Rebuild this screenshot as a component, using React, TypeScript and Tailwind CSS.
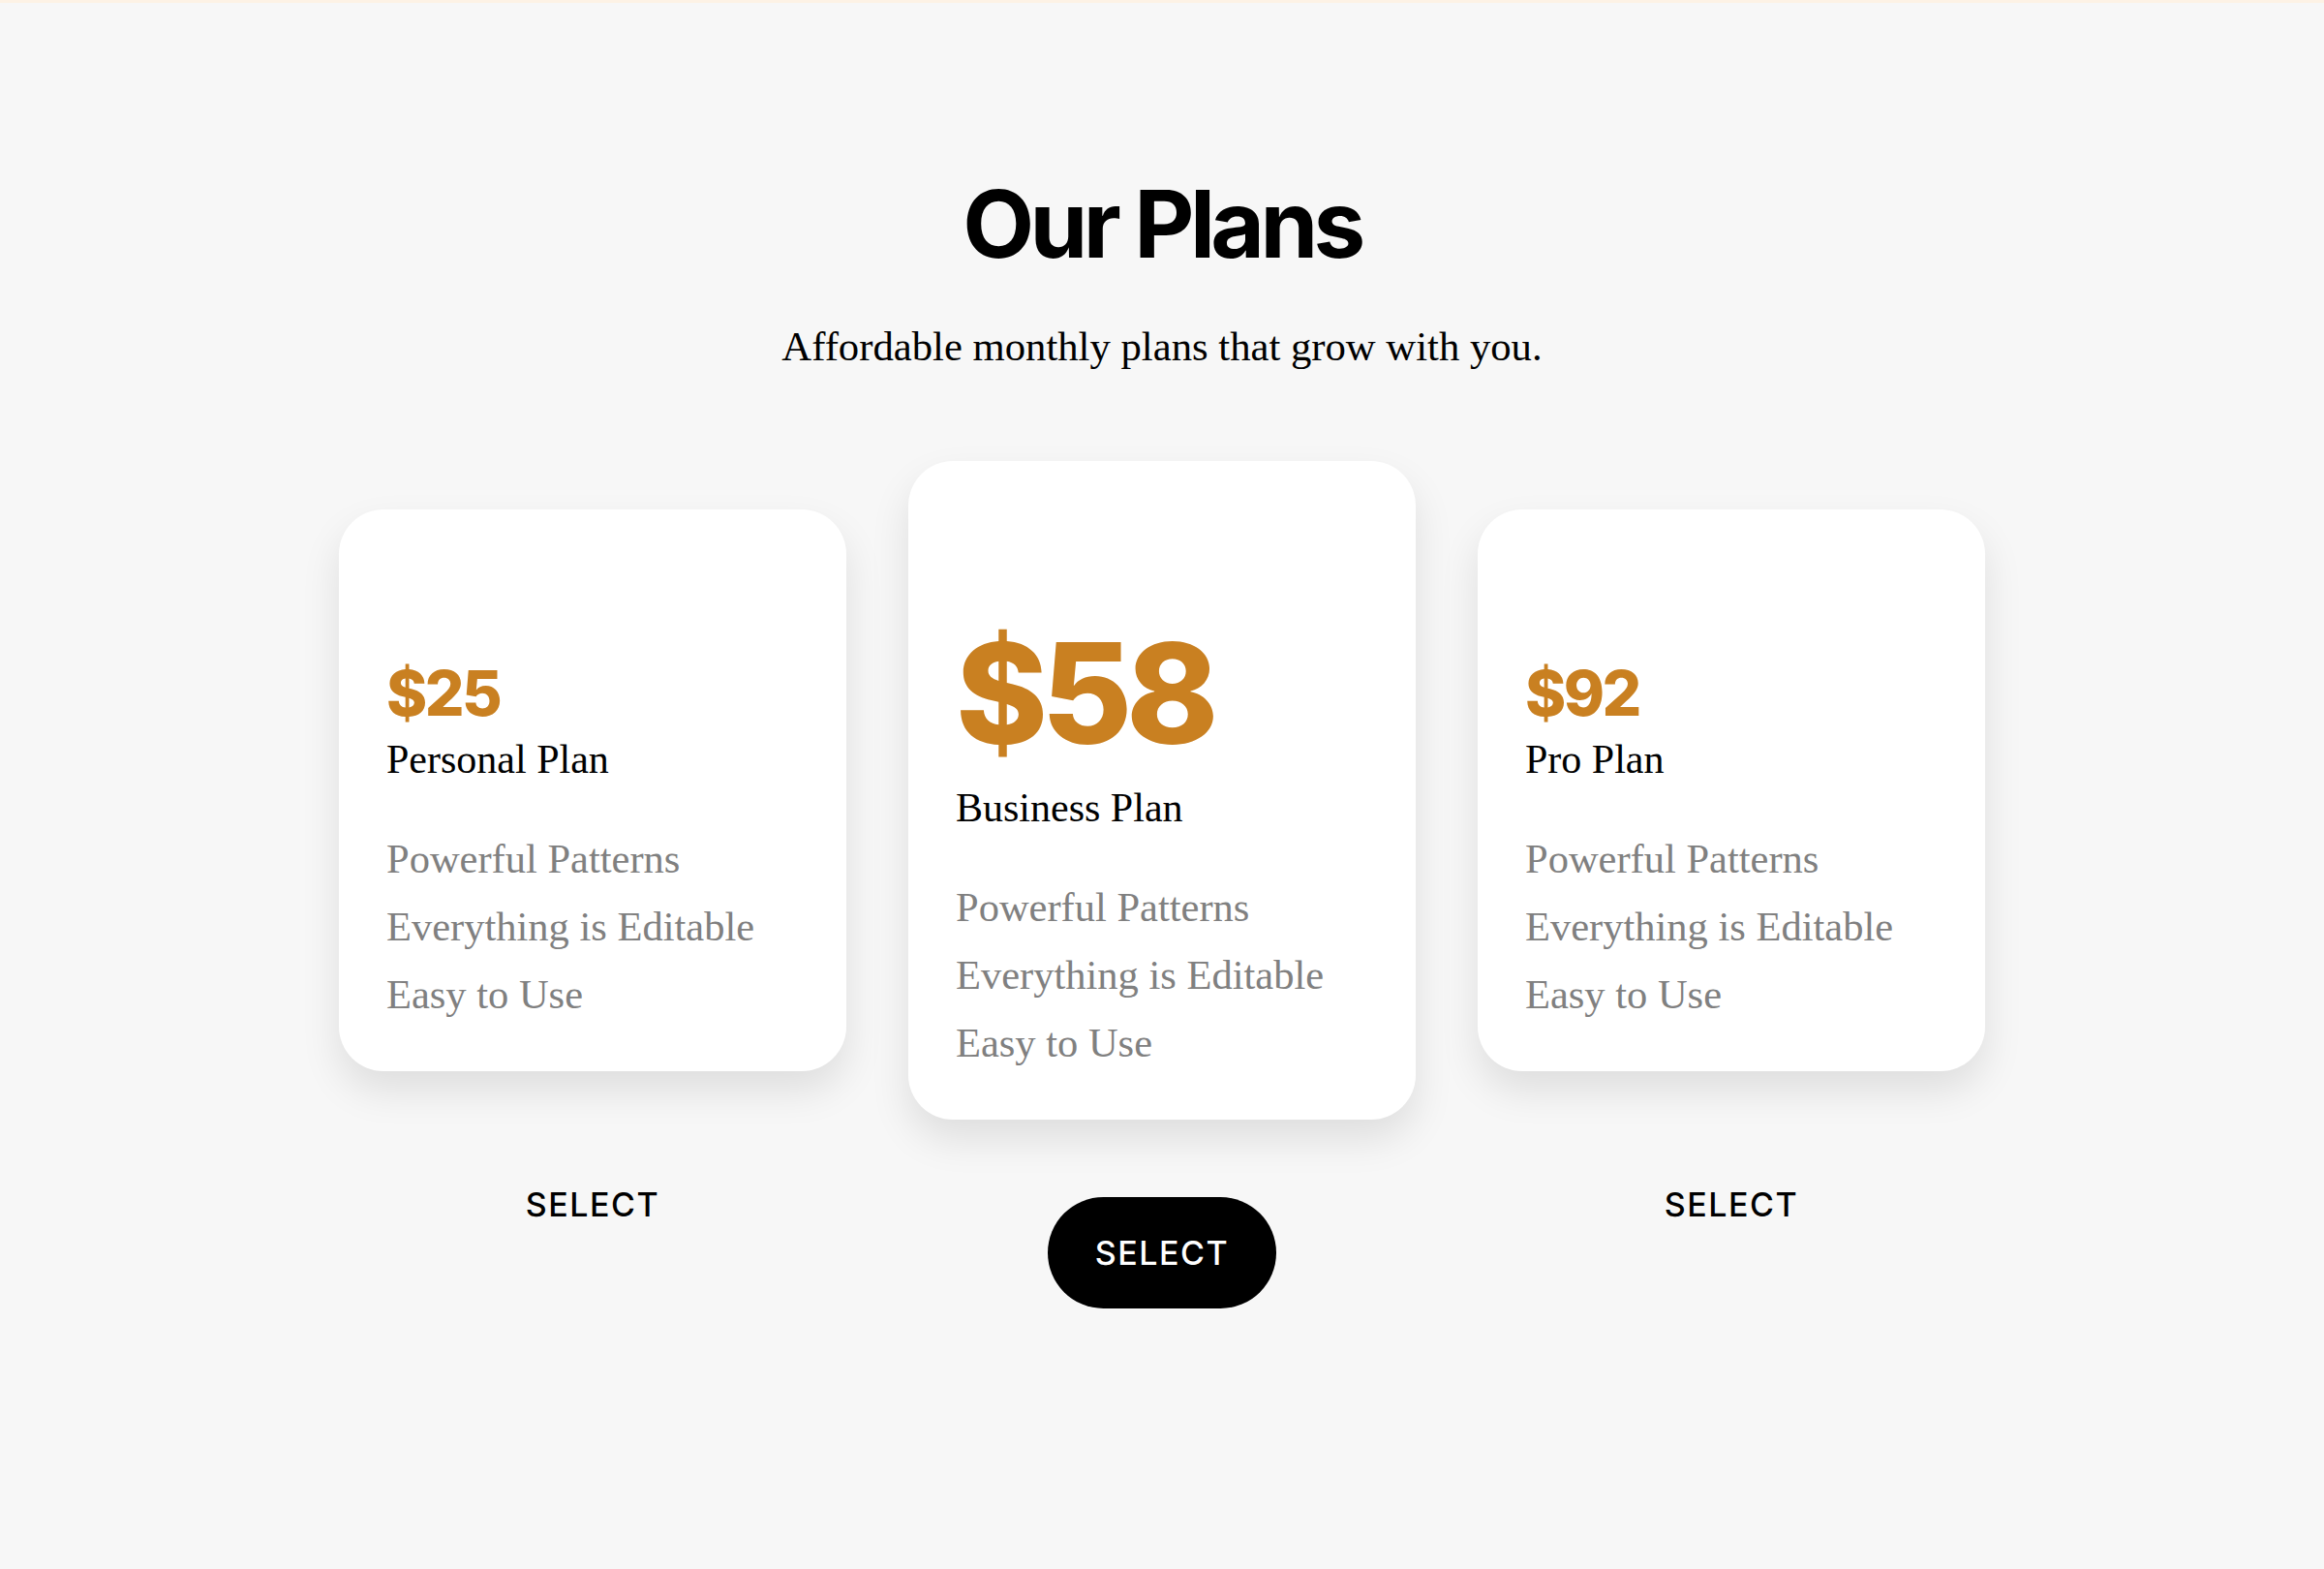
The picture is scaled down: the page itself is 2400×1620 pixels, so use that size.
import React from "react"

type Plan = {
    price: string
    name: string
    featured?: boolean
}

const plans: Plan[] = [
    { price: "$25", name: "Personal Plan" },
    { price: "$58", name: "Business Plan", featured: true },
    { price: "$92", name: "Pro Plan" },
]

const features = ["Powerful Patterns", "Everything is Editable", "Easy to Use"]

const PlanCard = ({ plan }: { plan: Plan }) => {
    return (
        <div className="flex flex-col items-center">
            <div
                className={`flex w-[524px] flex-col justify-end rounded-[46px] bg-white px-[49px] pb-[44px] shadow-[0_20px_40px_rgba(0,0,0,0.1)] ${plan.featured ? "h-[680px]" : "h-[580px]"}`}
            >
                <p
                    className={`font-['Inter',sans-serif] font-extrabold text-[#c98021] ${plan.featured ? "mb-[21px] text-[144px] leading-[144px] tracking-[-0.045em]" : "mb-[11px] text-[64px] leading-[64px] tracking-[-0.04em]"}`}
                >
                    {plan.price}
                </p>
                <p className="font-['Liberation_Serif',serif] text-[42px] leading-[50px] text-black">{plan.name}</p>
                <ul className="mt-[43px] font-['Liberation_Serif',serif] text-[42.5px] leading-[70px] text-[#808080]">
                    {features.map((f) => (
                        <li key={f}>{f}</li>
                    ))}
                </ul>
            </div>
            <button
                type="button"
                className={`mt-[80px] flex h-[115px] w-[236px] items-center justify-center rounded-full font-['Inter',sans-serif] text-[34px] font-medium tracking-[0.045em] ${plan.featured ? "bg-black text-white" : "bg-transparent text-black"}`}
            >
                SELECT
            </button>
        </div>
    )
}

const App = () => {
    return (
        <div className="min-h-screen bg-[#f7f7f7]">
            <div className="h-[3px] bg-[#fdf2e5]" />
            <section className="flex flex-col items-center pt-[180px] pb-[120px]">
                <h1 className="font-['Inter',sans-serif] text-[96px] leading-[96px] font-bold tracking-[-0.048em] text-black">
                    Our Plans
                </h1>
                <p className="mt-[54px] font-['Liberation_Serif',serif] text-[42.7px] leading-[50px] text-black">
                    Affordable monthly plans that grow with you.
                </p>
                <div className="mt-[93px] flex items-center gap-[64px]">
                    {plans.map((plan) => (
                        <PlanCard key={plan.name} plan={plan} />
                    ))}
                </div>
            </section>
        </div>
    )
}

export default App
